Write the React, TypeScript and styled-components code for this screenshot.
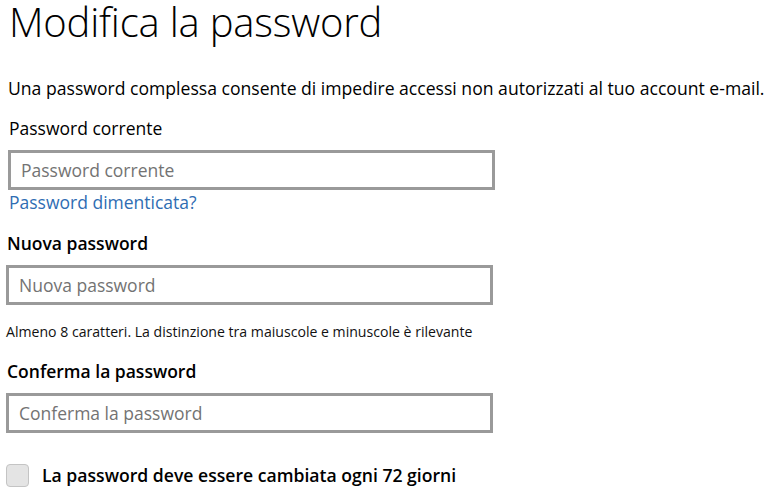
import React from "react";
import styled, { createGlobalStyle } from "styled-components";

const Global = createGlobalStyle`
  html, body { margin: 0; padding: 0; background: #fff; }
  body { font-family: "Open Sans", "Noto Sans", sans-serif; color: #000; }
  * { box-sizing: border-box; }
`;

const Page = styled.div`
  width: 772px;
  height: 492px;
  overflow: hidden;
  padding: 0 0 0 6px;
`;

const Title = styled.h1`
  margin: -2px 0 0 3px;
  font-weight: 300;
  font-size: 40px;
  line-height: 48px;
  letter-spacing: -0.2px;
`;

const Intro = styled.p`
  margin: 30px 0 0 2px;
  font-size: 17.6px;
  line-height: 24px;
  white-space: nowrap;
`;

const Section = styled.div<{ $indent?: number; $top: number }>`
  margin-top: ${(p) => p.$top}px;
  padding-left: ${(p) => p.$indent ?? 0}px;
  display: flex;
  flex-direction: column;
  align-items: flex-start;
`;

const Label = styled.label<{ $bold?: boolean }>`
  font-size: 17.5px;
  line-height: 24px;
  font-weight: ${(p) => (p.$bold ? 600 : 400)};
  padding-left: 1px;
`;

const Input = styled.input`
  margin-top: 10px;
  width: 487px;
  height: 40px;
  border: 3px solid #9a9a9a;
  border-radius: 0;
  padding: 0 10px;
  font-family: inherit;
  font-size: 17.5px;
  color: #000;
  outline: none;
  background: #fff;
  &::placeholder { color: #737373; }
`;

const Link = styled.a`
  font-size: 17.5px;
  line-height: 24px;
  color: #2f6db3;
  text-decoration: none;
  padding-left: 1px;
`;

const Hint = styled.div`
  margin-top: 18px;
  font-size: 14.1px;
  line-height: 18px;
  color: #111;
`;

const CheckRow = styled.label`
  margin-top: 30px;
  display: flex;
  align-items: center;
  gap: 13px;
  height: 24px;
`;

const Box = styled.span`
  width: 23px;
  height: 23px;
  border: 1px solid #c4c4c4;
  border-radius: 4px;
  background: #e4e4e4;
  flex: none;
`;

const CheckText = styled.span`
  font-size: 17.6px;
  line-height: 24px;
  font-weight: 600;
`;

export default function App() {
  return (
    <Page>
      <Global />
      <Title>Modifica la password</Title>
      <Intro>
        Una password complessa consente di impedire accessi non autorizzati al tuo account e-mail.
      </Intro>
      <Section $top={16} $indent={2}>
        <Label>Password corrente</Label>
        <Input type="password" placeholder="Password corrente" />
        <Link href="#">Password dimenticata?</Link>
      </Section>
      <Section $top={17}>
        <Label $bold>Nuova password</Label>
        <Input type="password" placeholder="Nuova password" />
        <Hint>Almeno 8 caratteri. La distinzione tra maiuscole e minuscole è rilevante</Hint>
      </Section>
      <Section $top={18}>
        <Label $bold>Conferma la password</Label>
        <Input type="password" placeholder="Conferma la password" />
        <CheckRow>
          <Box />
          <CheckText>La password deve essere cambiata ogni 72 giorni</CheckText>
        </CheckRow>
      </Section>
    </Page>
  );
}
